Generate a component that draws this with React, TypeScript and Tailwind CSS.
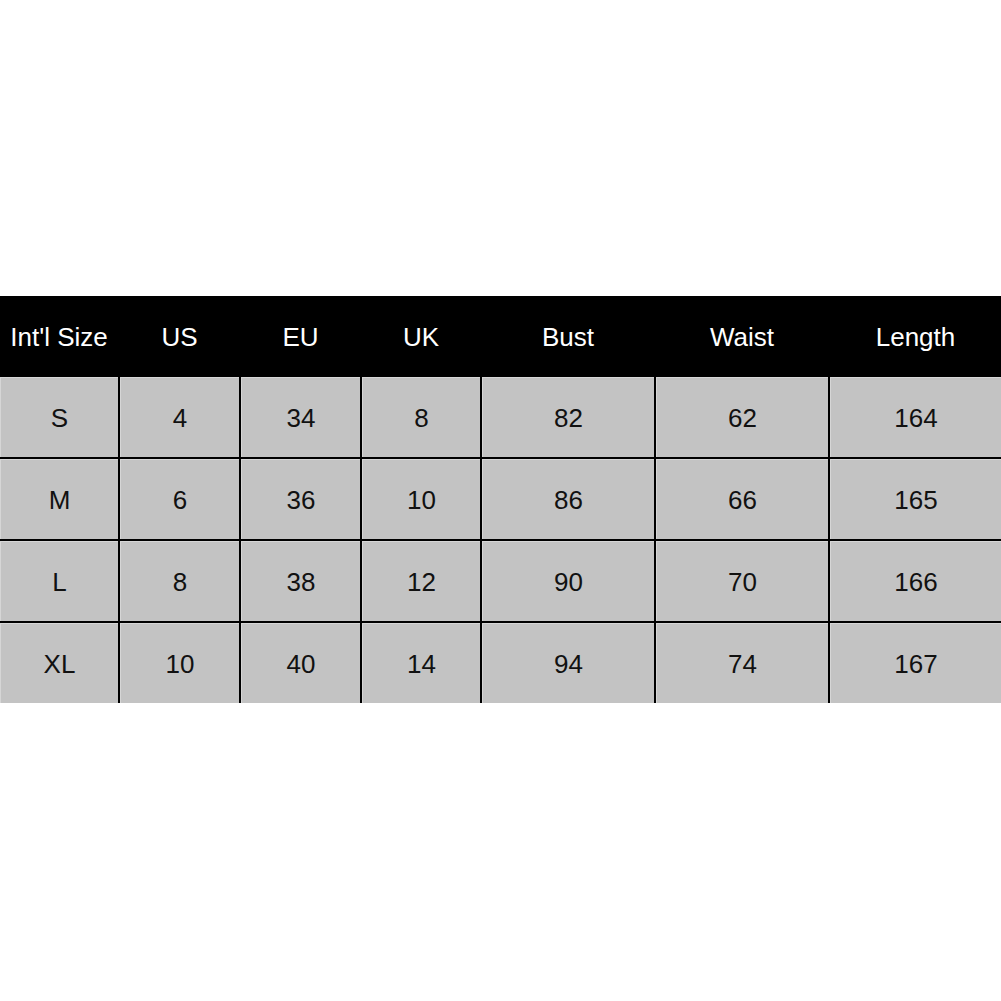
const headers = ["Int'l Size", "US", "EU", "UK", "Bust", "Waist", "Length"];

const rows = [
  ["S", "4", "34", "8", "82", "62", "164"],
  ["M", "6", "36", "10", "86", "66", "165"],
  ["L", "8", "38", "12", "90", "70", "166"],
  ["XL", "10", "40", "14", "94", "74", "167"],
];

const cols = "grid grid-cols-[118px_119px_119px_118px_172px_172px_171px] gap-x-[2px]";

export default function App() {
  return (
    <div className="w-[1001px] h-[1001px] bg-white pt-[296px] font-['Liberation_Sans',Arial,sans-serif] text-[26px]">
      <div className={`${cols} h-[81px] bg-black text-white`}>
        {headers.map((h) => (
          <div key={h} className="flex items-center justify-center pt-[2px]">
            {h}
          </div>
        ))}
      </div>

      <div className={`${cols} gap-y-[2px] bg-black`}>
        {rows.map((r, i) =>
          r.map((v, j) => (
            <div
              key={i + "-" + j}
              className="h-[80px] flex items-center justify-center pt-[2px] bg-[#c3c3c3] text-[#111] border-t border-l border-[#d6d6d6]"
            >
              {v}
            </div>
          ))
        )}
      </div>
    </div>
  );
}
